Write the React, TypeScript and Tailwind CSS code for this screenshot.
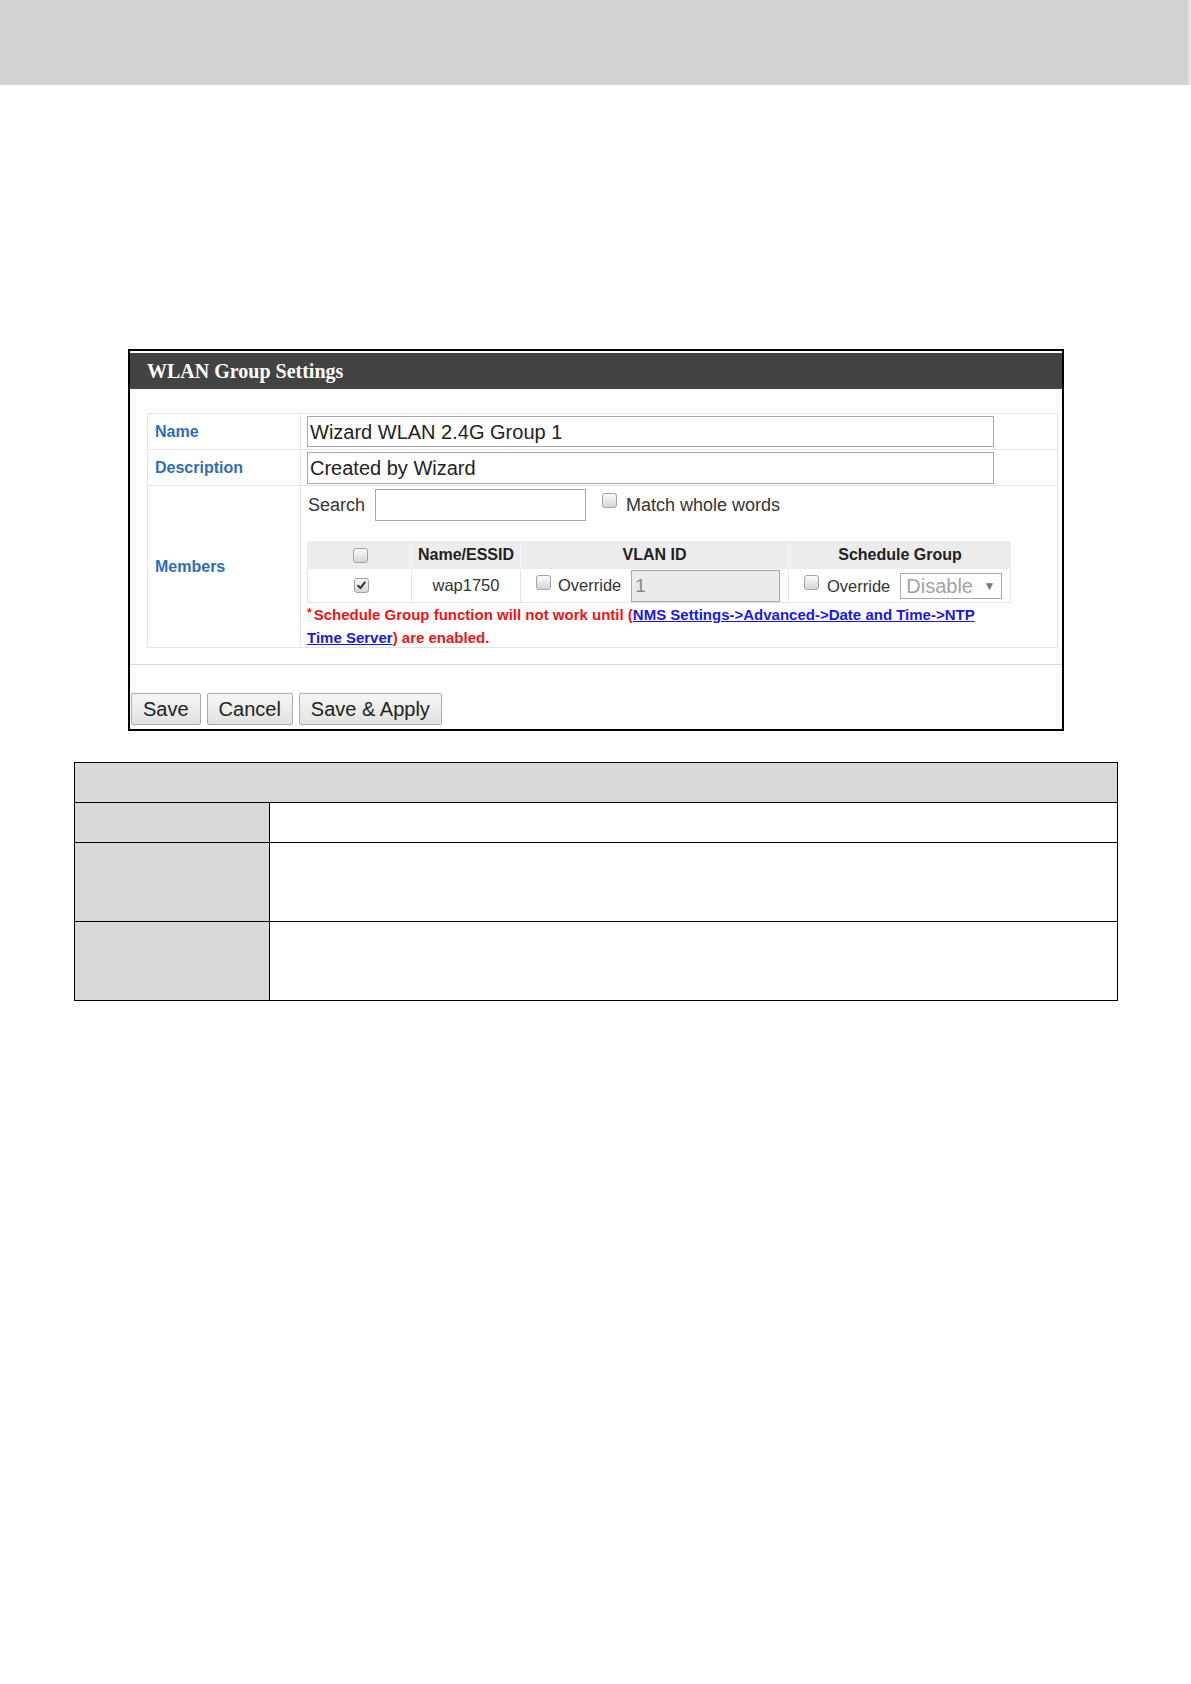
import React from "react";

function Cb({ checked }: { checked?: boolean }) {
  return (
    <span className="inline-flex w-[15px] h-[15px] shrink-0 items-center justify-center rounded-[3px] border border-[#a3a3a3] bg-linear-to-b from-[#fbfbfb] to-[#d6d6d6]">
      {checked && (
        <svg viewBox="0 0 12 12" className="w-[11px] h-[11px]">
          <path d="M2.3 6.3 L4.9 8.9 L9.6 2.6" stroke="#333" strokeWidth="2.2" fill="none" strokeLinecap="round" strokeLinejoin="round" />
        </svg>
      )}
    </span>
  );
}

function Btn({ children }: { children: React.ReactNode }) {
  return (
    <div className="h-[32px] px-[11px] flex items-center border border-[#adadad] rounded-[2px] bg-linear-to-b from-[#f6f6f6] to-[#e2e2e2] text-[20px] text-[#222] leading-none">
      {children}
    </div>
  );
}

export default function App() {
  return (
    <div className="w-[1191px] h-[1684px] bg-white font-['Liberation_Sans',Arial,sans-serif] text-[#222]">
      <div className="h-[85px] bg-[#d2d2d2] border-r-[3px] border-[#e6e6e6]" />

      {/* Panel */}
      <div className="ml-[128px] mt-[264px] w-[936px] h-[382px] border-2 border-black pt-[2px] flex flex-col">
        <div className="h-[36px] bg-[#434343] flex items-center pl-[17px]">
          <span className="font-['Liberation_Serif','Times_New_Roman',serif] font-bold text-[20px] text-white leading-none">
            WLAN Group Settings
          </span>
        </div>

        <div className="mt-[24px] ml-[17px] mr-[4px] border border-[#e4e4e4] flex flex-col">
          {/* Name */}
          <div className="flex h-[36px] border-b border-[#e4e4e4]">
            <div className="w-[153px] border-r border-[#e4e4e4] flex items-center pl-[7px] text-[16px] font-bold text-[#2f6db5]">
              Name
            </div>
            <div className="flex items-center pl-[6px]">
              <div className="w-[687px] h-[31px] border border-[#a9a9a9] flex items-center pl-[2px] text-[20px] text-[#222]">
                Wizard WLAN 2.4G Group 1
              </div>
            </div>
          </div>
          {/* Description */}
          <div className="flex h-[36px] border-b border-[#e4e4e4]">
            <div className="w-[153px] border-r border-[#e4e4e4] flex items-center pl-[7px] text-[16px] font-bold text-[#2f6db5]">
              Description
            </div>
            <div className="flex items-center pl-[6px]">
              <div className="w-[687px] h-[32px] border border-[#a9a9a9] flex items-center pl-[2px] text-[20px] text-[#222]">
                Created by Wizard
              </div>
            </div>
          </div>
          {/* Members */}
          <div className="flex h-[161px]">
            <div className="w-[153px] border-r border-[#e4e4e4] flex items-center pl-[7px] text-[16px] font-bold text-[#2f6db5]">
              Members
            </div>
            <div className="pl-[6px] pt-[3px] flex flex-col">
              <div className="flex items-center h-[32px]">
                <span className="text-[18px] text-[#333] ml-[1px]">Search</span>
                <div className="ml-[10px] w-[211px] h-[32px] border border-[#a9a9a9]" />
                <span className="ml-[16px] -mt-[9px] flex">
                  <Cb />
                </span>
                <span className="ml-[9px] text-[18px] text-[#333]">Match whole words</span>
              </div>

              <div className="mt-[20px] w-[704px] grid grid-cols-[105px_109px_268px_222px]">
                <div className="h-[28px] bg-[#ececec] border-r border-[#f8f8f8] flex items-center justify-center pl-[3px]">
                  <Cb />
                </div>
                <div className="h-[28px] bg-[#ececec] border-r border-[#f8f8f8] flex items-center justify-center text-[16px] font-bold text-[#222]">
                  Name/ESSID
                </div>
                <div className="h-[28px] bg-[#ececec] border-r border-[#f8f8f8] flex items-center justify-center text-[16px] font-bold text-[#222]">
                  VLAN ID
                </div>
                <div className="h-[28px] bg-[#ececec] flex items-center justify-center text-[16px] font-bold text-[#222]">
                  Schedule Group
                </div>

                <div className="h-[34px] border-l border-b border-r border-[#e4e4e4] flex items-center justify-center pl-[3px]">
                  <Cb checked />
                </div>
                <div className="h-[34px] border-b border-r border-[#e4e4e4] flex items-center justify-center text-[16.5px] text-[#333]">
                  wap1750
                </div>
                <div className="h-[34px] border-b border-r border-[#e4e4e4] flex items-end pl-[15px]">
                  <span className="mb-[12px] flex">
                    <Cb />
                  </span>
                  <span className="ml-[7px] mb-[4px] text-[16.5px] text-[#333]">Override</span>
                  <div className="ml-[10px] w-[149px] h-[32px] border border-[#a9a9a9] bg-[#ebebeb] flex items-center pl-[3px] text-[19px] text-[#8a8a8a]">
                    1
                  </div>
                </div>
                <div className="h-[34px] border-b border-r border-[#e4e4e4] flex items-center pl-[15px]">
                  <span className="-mt-[6px] flex">
                    <Cb />
                  </span>
                  <span className="ml-[8px] mt-[2px] text-[16.5px] text-[#333]">Override</span>
                  <div className="ml-[10px] w-[102px] h-[26px] border border-[#a9a9a9] bg-white flex items-center pl-[5px] pr-[6px] justify-between">
                    <span className="text-[20px] text-[#a3a3a3] leading-none">Disable</span>
                    <span className="text-[12px] text-[#777] leading-none">▼</span>
                  </div>
                </div>
              </div>

              <div className="flex flex-col text-[15px] font-bold leading-[23px] text-[#f01414]">
                <div className="flex items-start whitespace-pre">
                  <span className="text-[12px] mr-[2px] mt-[4px] leading-[12px]">*</span>
                  <span>Schedule Group function will not work until (</span>
                  <span className="underline text-[#1717e8]">NMS Settings-&gt;Advanced-&gt;Date and Time-&gt;NTP</span>
                </div>
                <div className="flex whitespace-pre">
                  <span className="underline text-[#1717e8]">Time Server</span>
                  <span>) are enabled.</span>
                </div>
              </div>
            </div>
          </div>
        </div>

        <div className="mt-[16px] h-px bg-[#d8d8d8]" />

        <div className="mt-[28px] ml-[1px] flex gap-[6px]">
          <Btn>Save</Btn>
          <Btn>Cancel</Btn>
          <Btn>Save &amp; Apply</Btn>
        </div>
      </div>

      {/* Bottom table */}
      <div className="ml-[74px] mt-[31px] w-[1044px] border border-black flex flex-col">
        <div className="h-[40px] bg-[#d9d9d9] border-b border-black" />
        <div className="flex h-[40px] border-b border-black">
          <div className="w-[195px] bg-[#d9d9d9] border-r border-black" />
          <div className="flex-1" />
        </div>
        <div className="flex h-[79px] border-b border-black">
          <div className="w-[195px] bg-[#d9d9d9] border-r border-black" />
          <div className="flex-1" />
        </div>
        <div className="flex h-[78px]">
          <div className="w-[195px] bg-[#d9d9d9] border-r border-black" />
          <div className="flex-1" />
        </div>
      </div>
    </div>
  );
}
